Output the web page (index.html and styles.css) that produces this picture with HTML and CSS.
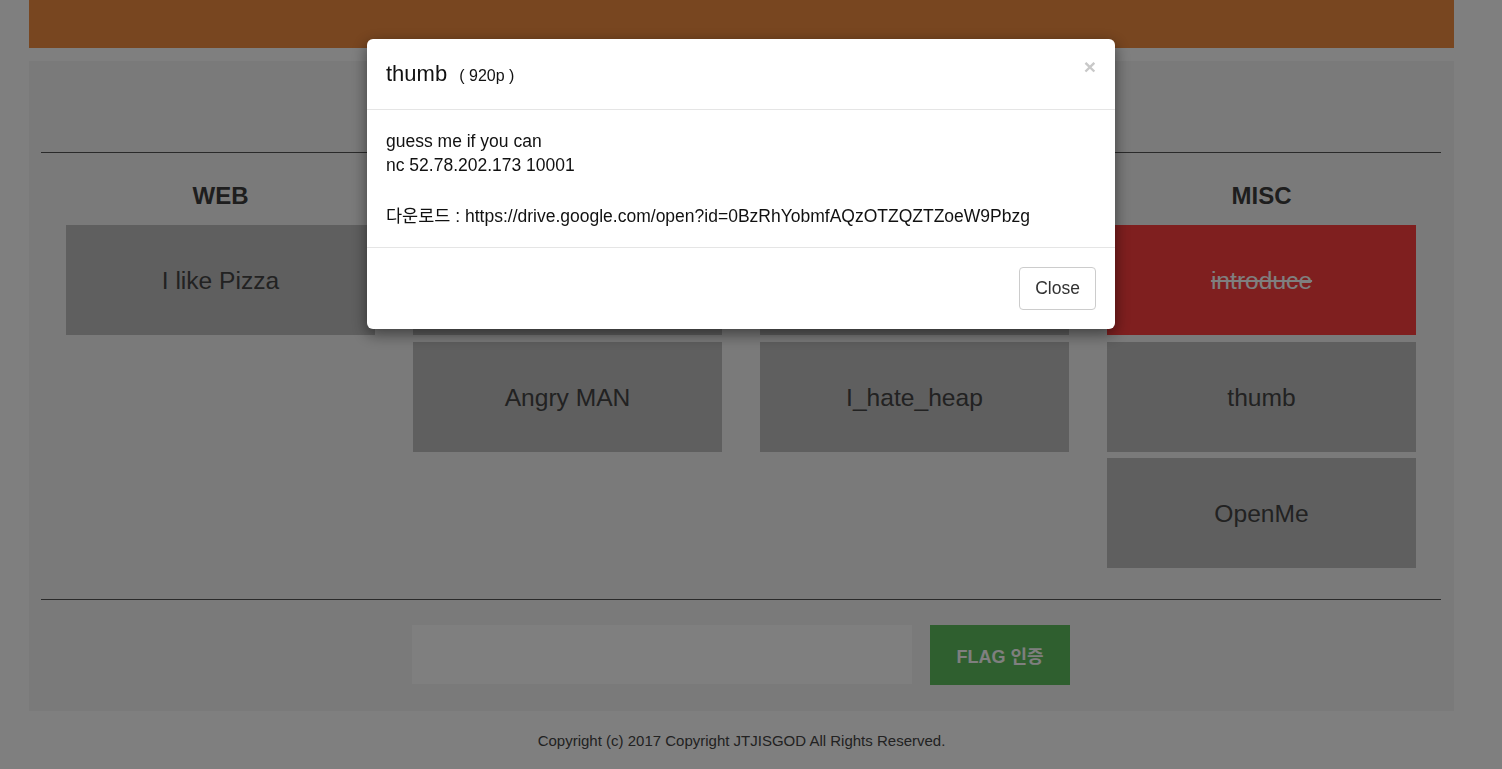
FILE: index.html
```html
<!DOCTYPE html>
<html lang="ko">
<head>
<meta charset="utf-8">
<title>JTJISGOD CTF</title>
<link rel="stylesheet" href="styles.css">
</head>
<body class="modal-open">
<div class="page">
  <header class="topbar"></header>
  <main class="board">
    <hr class="rule">
    <div class="columns">
      <section class="column">
        <h2 class="cat">WEB</h2>
        <div class="tile">I like Pizza</div>
      </section>
      <section class="column">
        <div class="cat" aria-hidden="true"></div>
        <div class="tile" aria-hidden="true"></div>
        <div class="tile">Angry MAN</div>
      </section>
      <section class="column">
        <div class="cat" aria-hidden="true"></div>
        <div class="tile" aria-hidden="true"></div>
        <div class="tile">I_hate_heap</div>
      </section>
      <section class="column">
        <h2 class="cat">MISC</h2>
        <div class="tile tile-solved"><s>introduce</s></div>
        <div class="tile">thumb</div>
        <div class="tile">OpenMe</div>
      </section>
    </div>
    <hr class="rule">
    <form class="flag-form">
      <input class="flag-input" type="text">
      <button class="flag-btn" type="button">FLAG 인증</button>
    </form>
  </main>
  <footer class="footer">Copyright (c) 2017 Copyright JTJISGOD All Rights Reserved.</footer>
</div>

<div class="backdrop"></div>
<div class="modal">
  <div class="dialog">
    <div class="modal-header">
      <h4 class="modal-title">thumb <small class="points">( 920p )</small></h4>
      <button class="close" type="button">&times;</button>
    </div>
    <div class="modal-body">
      guess me if you can<br>
      nc 52.78.202.173 10001<br>
      <br>
      <span class="dl-line">다운로드 : https://drive.google.com/open?id=0BzRhYobmfAQzOTZQZTZoeW9Pbzg</span>
    </div>
    <div class="modal-footer">
      <button class="btn-close" type="button">Close</button>
    </div>
  </div>
</div>
</body>
</html>
```

FILE: styles.css
```css
* { box-sizing: border-box; }

html, body {
  margin: 0;
  height: 100%;
}

body {
  background: #ffffff;
  font-family: "Liberation Sans", Arial, "Noto Sans CJK KR", sans-serif;
  color: #444;
  overflow: hidden;
}

.modal-open {
  padding-right: 19px;
}

.page {
  width: 1425px;
  margin: 0 auto;
}

.topbar {
  height: 48px;
  background: #f08c40;
}

.board {
  margin-top: 13px;
  background: #f5f5f5;
  padding: 91px 13px 26px 12px;
}

.rule {
  margin: 0;
  border: 0;
  border-top: 1px solid #555;
}

.columns {
  display: grid;
  grid-template-columns: repeat(4, 309px);
  column-gap: 38px;
  justify-content: center;
  padding-top: 28px;
  padding-bottom: 31px;
  align-items: start;
}

.column {
  display: flex;
  flex-direction: column;
  gap: 6.5px;
}

.cat {
  margin: 0 0 7.5px;
  height: 30px;
  line-height: 30px;
  font-size: 24px;
  font-weight: bold;
  text-align: center;
  color: #3c3c3c;
}

.tile {
  height: 110px;
  background: #bebebe;
  display: flex;
  align-items: center;
  justify-content: center;
  padding-top: 2px;
  font-size: 24.6px;
  color: #444;
}

.tile-solved {
  background: #fe3e3e;
  color: #fff;
}

.tile-solved s {
  text-decoration: line-through;
}

.flag-form {
  display: flex;
  justify-content: center;
  gap: 18px;
  padding-top: 25px;
}

.flag-input {
  width: 500px;
  height: 59px;
  border: 0;
  background: #fff;
}

.flag-btn {
  width: 140px;
  height: 60px;
  border: 0;
  background: #5ebe5e;
  color: #fff;
  font-family: "Liberation Sans", Arial, "Noto Sans CJK KR", sans-serif;
  font-weight: bold;
  font-size: 18px;
}

.footer {
  margin-top: 20px;
  text-align: center;
  font-size: 15px;
  line-height: 20px;
  color: #444;
}

.backdrop {
  position: fixed;
  inset: 0;
  background: rgba(0, 0, 0, 0.5);
}

.modal {
  position: fixed;
  top: 0;
  left: 0;
  right: 20px;
  bottom: 0;
}

.dialog {
  width: 748px;
  margin: 39px auto 0;
  background: #fff;
  border-radius: 6px;
  box-shadow: 0 5px 15px rgba(0, 0, 0, 0.5);
  color: #111;
}

.modal-header {
  display: flex;
  justify-content: space-between;
  align-items: flex-start;
  padding: 19px 19px 18px;
  border-bottom: 1px solid #e5e5e5;
}

.modal-title {
  margin: 0;
  font-size: 22px;
  font-weight: normal;
  line-height: 31px;
}

.points {
  font-size: 16px;
  margin-left: 6px;
  color: #111;
}

.close {
  border: 0;
  background: none;
  padding: 0;
  margin-top: -2px;
  font-family: "Liberation Sans", Arial, sans-serif;
  font-size: 21px;
  font-weight: bold;
  line-height: 1;
  color: #c8c8c8;
}

.modal-body {
  padding: 19px;
  font-size: 17.5px;
  line-height: 24px;
}

.dl-line {
  display: block;
  margin-top: 3px;
}

.modal-footer {
  display: flex;
  justify-content: flex-end;
  padding: 19px;
  border-top: 1px solid #e5e5e5;
}

.btn-close {
  width: 77px;
  height: 43px;
  background: #fff;
  border: 1px solid #ccc;
  border-radius: 4px;
  font-family: "Liberation Sans", Arial, sans-serif;
  font-size: 17.5px;
  color: #333;
}
```
